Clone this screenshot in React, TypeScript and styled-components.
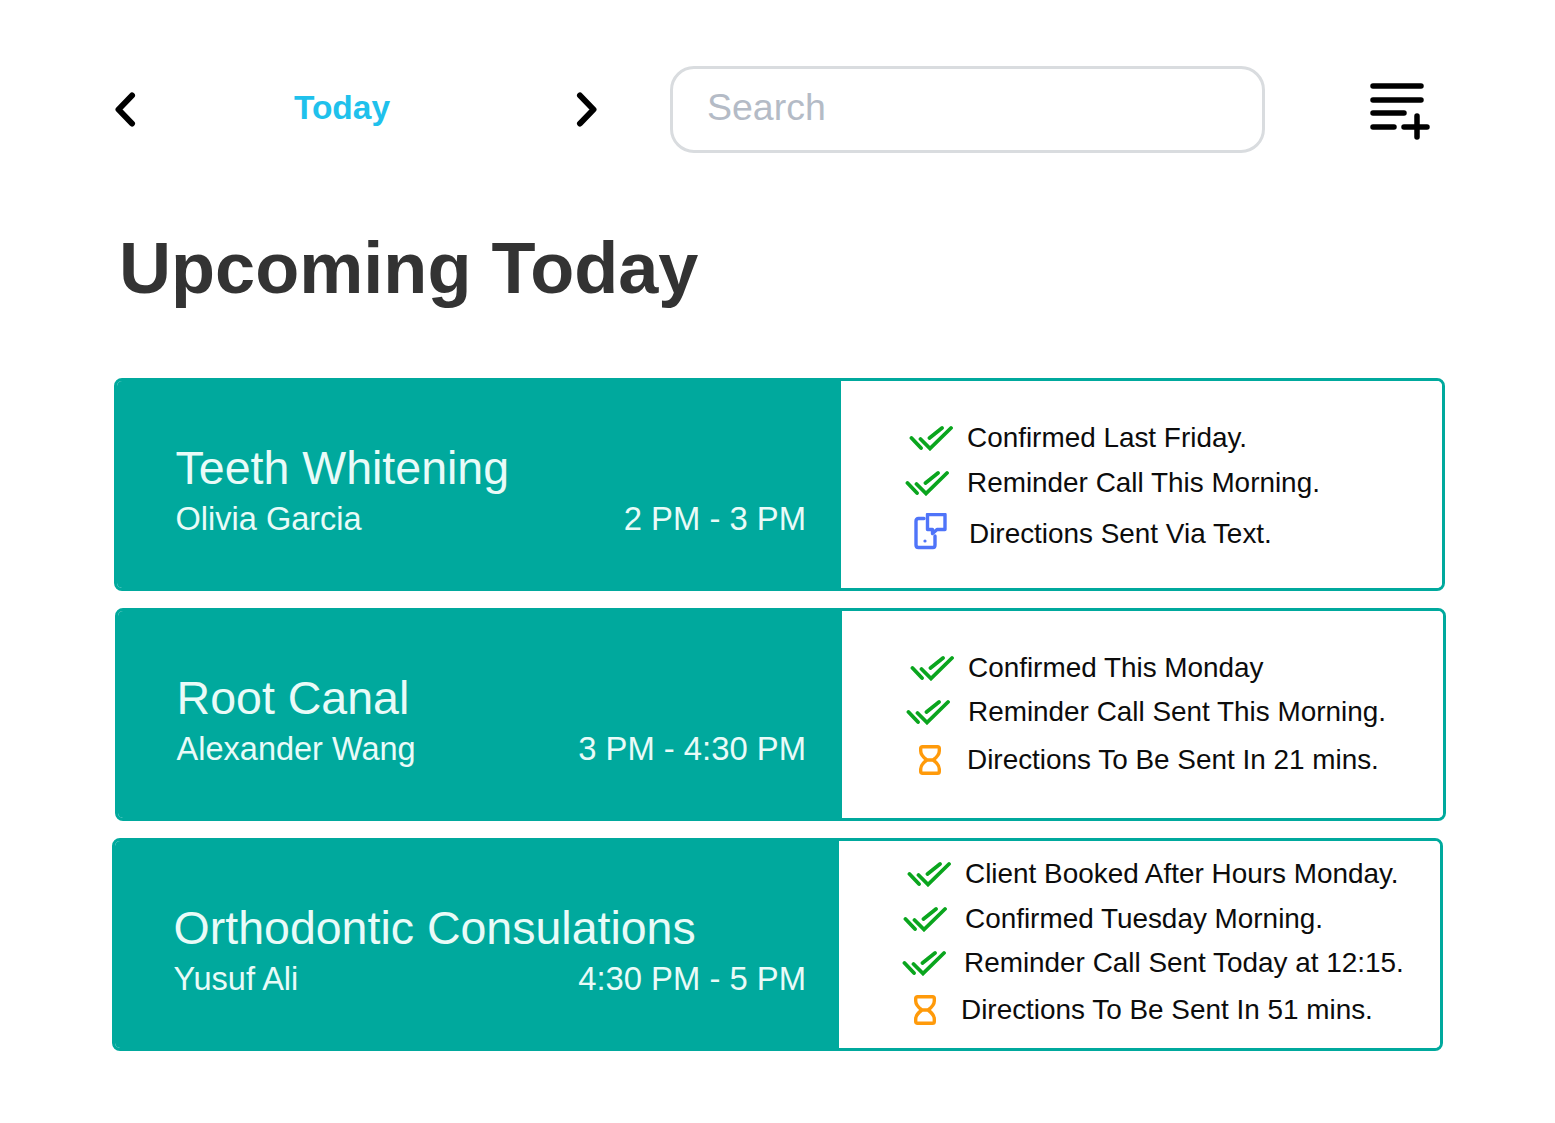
import React from 'react';
import styled, { createGlobalStyle } from 'styled-components';

const GlobalStyle = createGlobalStyle`
  html, body {
    margin: 0;
    background: #fff;
    font-family: "Liberation Sans", Arial, sans-serif;
  }
`;

type Status = { kind: 'check' | 'phone' | 'wait'; text: string; top: number; iconAt: number; textAt: number };
type Appt = {
  title: string;
  client: string;
  time: string;
  shift: number;
  top: number;
  timeRight: number;
  statuses: Status[];
};

const iconWidth = { check: 44, phone: 34, wait: 24 };

const appts: Appt[] = [
  {
    title: 'Teeth Whitening',
    client: 'Olivia Garcia',
    time: '2 PM - 3 PM',
    shift: 114,
    top: 0,
    timeRight: 35,
    statuses: [
      { kind: 'check', text: 'Confirmed Last Friday.', top: 38, iconAt: 68, textAt: 126 },
      { kind: 'check', text: 'Reminder Call This Morning.', top: 7, iconAt: 64, textAt: 126 },
      { kind: 'phone', text: 'Directions Sent Via Text.', top: 13, iconAt: 73, textAt: 128 },
    ],
  },
  {
    title: 'Root Canal',
    client: 'Alexander Wang',
    time: '3 PM - 4:30 PM',
    shift: 115,
    top: 17,
    timeRight: 36,
    statuses: [
      { kind: 'check', text: 'Confirmed This Monday', top: 38, iconAt: 68, textAt: 126 },
      { kind: 'check', text: 'Reminder Call Sent This Morning.', top: 6, iconAt: 64, textAt: 126 },
      { kind: 'wait', text: 'Directions To Be Sent In 21 mins.', top: 10, iconAt: 76, textAt: 125 },
    ],
  },
  {
    title: 'Orthodontic Consulations',
    client: 'Yusuf Ali',
    time: '4:30 PM - 5 PM',
    shift: 112,
    top: 17,
    timeRight: 33,
    statuses: [
      { kind: 'check', text: 'Client Booked After Hours Monday.', top: 14, iconAt: 68, textAt: 126 },
      { kind: 'check', text: 'Confirmed Tuesday Morning.', top: 7, iconAt: 64, textAt: 126 },
      { kind: 'check', text: 'Reminder Call Sent Today at 12:15.', top: 6, iconAt: 63, textAt: 125 },
      { kind: 'wait', text: 'Directions To Be Sent In 51 mins.', top: 9, iconAt: 74, textAt: 122 },
    ],
  },
];

const Page = styled.div`
  width: 1555px;
  height: 1123px;
  overflow: hidden;
  padding-top: 66px;
  box-sizing: border-box;
`;

const Toolbar = styled.header`
  display: flex;
  align-items: center;
  height: 87px;
  padding-left: 112px;
`;

const NavButton = styled.button`
  display: flex;
  padding: 0;
  border: 0;
  background: none;
  cursor: pointer;
`;

const TodayLabel = styled.div`
  width: 436px;
  box-sizing: border-box;
  padding: 0 28px 3px 0;
  text-align: center;
  color: #1fc1ec;
  font-size: 33.5px;
  font-weight: 700;
`;

const SearchInput = styled.input`
  width: 595px;
  height: 87px;
  margin-left: 70px;
  box-sizing: border-box;
  padding: 0 33px 5px 34px;
  border: 3px solid #d9dcdf;
  border-radius: 24px;
  font: 37.5px "Liberation Sans", Arial, sans-serif;
  outline: none;
  &::placeholder {
    color: #b4bbc6;
    opacity: 1;
  }
`;

const AddButton = styled(NavButton)`
  margin-left: 103px;
  margin-top: 5px;
`;

const Heading = styled.h1`
  margin: 70px 0 0 119px;
  color: #333;
  font-size: 72.1px;
  line-height: 90px;
  font-weight: 700;
`;

const CardList = styled.main`
  margin-top: 65px;
`;

const Card = styled.section<{ $shift: number; $top: number }>`
  display: flex;
  width: 1331px;
  height: 213px;
  box-sizing: border-box;
  margin-left: ${(p) => p.$shift}px;
  margin-top: ${(p) => p.$top}px;
  border: 3px solid #00a99d;
  border-radius: 8px;
  overflow: hidden;
`;

const Summary = styled.div`
  width: 724px;
  flex: none;
  box-sizing: border-box;
  padding: 58px 0 0 58.6px;
  background: #00a99d;
  color: #e9fbf8;
`;

const Title = styled.div`
  font-size: 46.5px;
  line-height: 58px;
`;

const Meta = styled.div<{ $right: number }>`
  display: flex;
  justify-content: space-between;
  padding-right: ${(p) => p.$right}px;
  font-size: 32.5px;
  line-height: 44px;
`;

const TimeRange = styled.span`
  font-size: 32.8px;
`;

const Details = styled.div`
  flex: 1;
  background: #fff;
`;

const StatusRow = styled.div<{ $top: number; $at: number }>`
  display: flex;
  align-items: center;
  height: 38px;
  margin-top: ${(p) => p.$top}px;
  padding-left: ${(p) => p.$at}px;
  color: #0c0c0c;
  font-size: 27.9px;
`;

const StatusText = styled.span<{ $gap: number }>`
  margin-left: ${(p) => p.$gap}px;
  white-space: nowrap;
`;

const ChevronLeft = () => (
  <svg width="26" height="36" viewBox="0 0 26 36" fill="none" stroke="#000" strokeWidth="6" strokeLinecap="round" strokeLinejoin="round">
    <path d="M20 3.5 L6.5 17.5 L20 31.5" />
  </svg>
);

const ChevronRight = () => (
  <svg width="26" height="36" viewBox="0 0 26 36" fill="none" stroke="#000" strokeWidth="6" strokeLinecap="round" strokeLinejoin="round">
    <path d="M6 3.5 L19.5 17.5 L6 31.5" />
  </svg>
);

const PlaylistAdd = () => (
  <svg width="64" height="60" viewBox="0 0 64 60" fill="none" stroke="#000" strokeWidth="5.5" strokeLinecap="round">
    <path d="M5 4 H53 M5 18 H53 M5 31 H36 M5 45 H26 M36 45 H59 M49 34 V55" />
  </svg>
);

const DoubleCheck = () => (
  <svg width="44" height="26" viewBox="0 0 44 26" fill="none" stroke="#0aa51e" strokeWidth="3.8" strokeLinecap="round">
    <path d="M2.5 13 L12 23 M11.5 14 L21 23.5 L42 3 M20.5 13 L33 3" />
  </svg>
);

const PhoneMessage = () => (
  <svg width="34" height="42" viewBox="0 0 34 42" fill="none" stroke="#4f74f9" strokeWidth="3.4" strokeLinecap="round" strokeLinejoin="round">
    <path d="M10 5.5 H4.5 Q2 5.5 2 8 V32 Q2 34.5 4.5 34.5 H19 Q21 34.5 21 32 V23" />
    <path d="M13.5 1.5 H31 V16.5 H23 L18.5 20.5 V16.5 H13.5 Z" />
    <circle cx="11" cy="28" r="1.6" fill="#4f74f9" stroke="none" />
  </svg>
);

const Hourglass = () => (
  <svg width="24" height="30" viewBox="0 0 24 30" fill="none" stroke="#ff9a0a" strokeWidth="3.4" strokeLinecap="round" strokeLinejoin="round">
    <path d="M4.5 1.7 H19.5 Q21.3 1.7 21.3 3.5 V6 Q21.3 10.5 15 15 Q21.3 19.5 21.3 24 V26.5 Q21.3 28.3 19.5 28.3 H4.5 Q2.7 28.3 2.7 26.5 V24 Q2.7 19.5 9 15 Q2.7 10.5 2.7 6 V3.5 Q2.7 1.7 4.5 1.7 Z M9 15 H15" />
  </svg>
);

const icons = {
  check: <DoubleCheck />,
  phone: <PhoneMessage />,
  wait: <Hourglass />,
};

const App: React.FC = () => {
  return (
    <Page>
      <GlobalStyle />
      <Toolbar>
        <NavButton aria-label="Previous day">
          <ChevronLeft />
        </NavButton>
        <TodayLabel>Today</TodayLabel>
        <NavButton aria-label="Next day">
          <ChevronRight />
        </NavButton>
        <SearchInput placeholder="Search" />
        <AddButton aria-label="Add">
          <PlaylistAdd />
        </AddButton>
      </Toolbar>
      <Heading>Upcoming Today</Heading>
      <CardList>
        {appts.map((a) => (
          <Card key={a.title} $shift={a.shift} $top={a.top}>
            <Summary>
              <Title>{a.title}</Title>
              <Meta $right={a.timeRight}>
                <span>{a.client}</span>
                <TimeRange>{a.time}</TimeRange>
              </Meta>
            </Summary>
            <Details>
              {a.statuses.map((s) => (
                <StatusRow key={s.text} $top={s.top} $at={s.iconAt}>
                  {icons[s.kind]}
                  <StatusText $gap={s.textAt - s.iconAt - iconWidth[s.kind]}>{s.text}</StatusText>
                </StatusRow>
              ))}
            </Details>
          </Card>
        ))}
      </CardList>
    </Page>
  );
};

export default App;
